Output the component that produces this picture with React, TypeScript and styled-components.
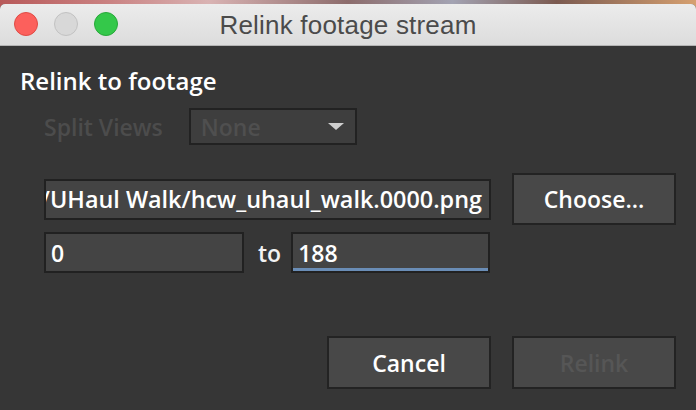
import styled, { createGlobalStyle } from "styled-components";

const GlobalStyle = createGlobalStyle`
  html, body {
    margin: 0;
    padding: 0;
    background: #363636;
  }
  body {
    font-family: "Open Sans", "DejaVu Sans", sans-serif;
  }
`;

const Desktop = styled.div`
  width: 696px;
  height: 410px;
  overflow: hidden;
  display: flex;
  flex-direction: column;
  background: linear-gradient(90deg, #b85a5a 0%, #c98080 15%, #d9b3b3 30%, #8c6c6c 50%, #a3a3b3 65%, #7b5a50 80%, #d6a070 100%);
`;

const Window = styled.div`
  margin-top: 4px;
  flex: 1;
  display: flex;
  flex-direction: column;
  border-radius: 5px 5px 0 0;
  overflow: hidden;
  background: #363636;
`;

const TitleBar = styled.div`
  position: relative;
  height: 41px;
  flex-shrink: 0;
  display: flex;
  align-items: center;
  justify-content: center;
  background: linear-gradient(180deg, #ececec 0%, #dcdcdc 100%);
  border-bottom: 1px solid #b4b4b4;
`;

const Lights = styled.div`
  position: absolute;
  left: 14px;
  top: 8px;
  display: flex;
  gap: 16px;
`;

const Light = styled.span<{ $fill: string; $edge: string }>`
  width: 22px;
  height: 22px;
  border-radius: 50%;
  background: ${({ $fill }) => $fill};
  border: 1px solid ${({ $edge }) => $edge};
`;

const Title = styled.div`
  font-family: "Liberation Sans", Arial, sans-serif;
  font-size: 26px;
  color: #4b4b4b;
  letter-spacing: 0.2px;
  margin-top: 2px;
`;

const Body = styled.div`
  padding: 20px 20px 0 20px;
  display: flex;
  flex-direction: column;
  color: #f2f2f2;
  font-size: 23px;
  font-weight: 600;
`;

const Heading = styled.div`
  font-size: 24px;
  line-height: 30px;
  color: #ffffff;
`;

const SplitRow = styled.div`
  margin-top: 12px;
  padding-left: 24px;
  display: flex;
  align-items: center;
  gap: 26px;
`;

const DisabledLabel = styled.span`
  color: #4c4c4c;
  line-height: 30px;
`;

const Dropdown = styled.div`
  box-sizing: border-box;
  width: 168px;
  height: 37px;
  padding: 0 10px;
  display: flex;
  align-items: center;
  justify-content: space-between;
  background: #3e3e3e;
  border: 2px solid #222222;
  color: #4f4f4f;
`;

const Caret = styled.span`
  width: 0;
  height: 0;
  border-left: 8px solid transparent;
  border-right: 8px solid transparent;
  border-top: 7px solid #cfcfcf;
  margin-right: 1px;
`;

const FormGrid = styled.div`
  margin-top: 28px;
  padding-left: 24px;
  display: grid;
  grid-template-columns: 447px 164px;
  column-gap: 21px;
  row-gap: 7px;
  align-items: center;
`;

const Field = styled.div<{ $focused?: boolean; $alignEnd?: boolean }>`
  box-sizing: border-box;
  height: 41px;
  display: flex;
  align-items: center;
  justify-content: ${({ $alignEnd }) => ($alignEnd ? "flex-end" : "flex-start")};
  padding: ${({ $alignEnd }) => ($alignEnd ? "0 7px 0 0" : "0 0 0 5px")};
  overflow: hidden;
  white-space: nowrap;
  background: #444444;
  border: 2px solid #212121;
  color: #ffffff;
  box-shadow: ${({ $focused }) => ($focused ? "inset 0 -3px 0 #6a8db6" : "none")};
`;

const PathField = styled(Field)`
  font-size: 23.4px;
`;

const Button = styled.div<{ $disabled?: boolean }>`
  box-sizing: border-box;
  height: 52px;
  display: flex;
  align-items: center;
  justify-content: center;
  background: #484848;
  border: 2px solid #232323;
  color: ${({ $disabled }) => ($disabled ? "#565656" : "#ffffff")};
`;

const RangeRow = styled.div`
  display: flex;
  align-items: center;
`;

const RangeField = styled(Field)<{ $width: number }>`
  width: ${({ $width }) => $width}px;
`;

const ToLabel = styled.span`
  margin: 0 10px 0 14px;
  color: #f2f2f2;
`;

const Footer = styled.div`
  margin-top: 63px;
  display: flex;
  justify-content: flex-end;
  gap: 21px;
`;

const FooterButton = styled(Button)`
  width: 164px;
  height: 53px;
`;

export default function App() {
  return (
    <Desktop>
      <GlobalStyle />
      <Window>
        <TitleBar>
          <Lights>
            <Light $fill="#fc605c" $edge="#df4b45" />
            <Light $fill="#d8d8d8" $edge="#c2c2c2" />
            <Light $fill="#34c84a" $edge="#28a83a" />
          </Lights>
          <Title>Relink footage stream</Title>
        </TitleBar>
        <Body>
          <Heading>Relink to footage</Heading>
          <SplitRow>
            <DisabledLabel>Split Views</DisabledLabel>
            <Dropdown>
              <span>None</span>
              <Caret />
            </Dropdown>
          </SplitRow>
          <FormGrid>
            <PathField $alignEnd>/Users/footage/UHaul Walk/hcw_uhaul_walk.0000.png</PathField>
            <Button>Choose...</Button>
            <RangeRow>
              <RangeField $width={200}>0</RangeField>
              <ToLabel>to</ToLabel>
              <RangeField $width={199} $focused>188</RangeField>
            </RangeRow>
          </FormGrid>
          <Footer>
            <FooterButton>Cancel</FooterButton>
            <FooterButton $disabled>Relink</FooterButton>
          </Footer>
        </Body>
      </Window>
    </Desktop>
  );
}
